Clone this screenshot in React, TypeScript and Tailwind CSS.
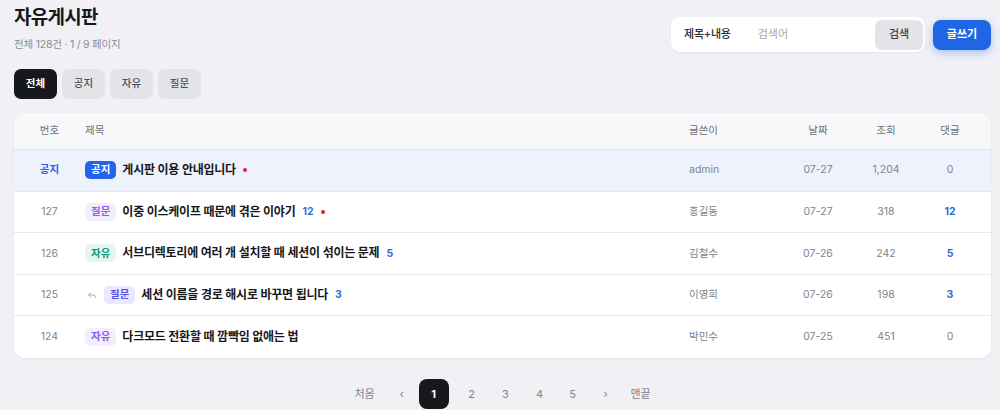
import React from "react";
import { Reply } from "lucide-react";

type Tag = "notice" | "qna" | "qna2" | "free" | "free2";

interface Post {
  no: string;
  tag: Tag;
  title: string;
  comments?: number;
  isNew?: boolean;
  reply?: boolean;
  author: string;
  date: string;
  views: string;
  commentCount: number;
}

const posts: Post[] = [
  { no: "공지", tag: "notice", title: "게시판 이용 안내입니다", isNew: true, author: "admin", date: "07-27", views: "1,204", commentCount: 0 },
  { no: "127", tag: "qna", title: "이중 이스케이프 때문에 겪은 이야기", comments: 12, isNew: true, author: "홍길동", date: "07-27", views: "318", commentCount: 12 },
  { no: "126", tag: "free", title: "서브디렉토리에 여러 개 설치할 때 세션이 섞이는 문제", comments: 5, author: "김철수", date: "07-26", views: "242", commentCount: 5 },
  { no: "125", tag: "qna2", title: "세션 이름을 경로 해시로 바꾸면 됩니다", comments: 3, reply: true, author: "이영희", date: "07-26", views: "198", commentCount: 3 },
  { no: "124", tag: "free2", title: "다크모드 전환할 때 깜빡임 없애는 법", author: "박민수", date: "07-25", views: "451", commentCount: 0 },
];

function Badge({ tag }: { tag: Tag }) {
  if (tag === "notice")
    return <span className="inline-flex h-[18px] items-center rounded-[5px] bg-[#2563eb] px-[6px] text-[10.5px] font-bold text-white">공지</span>;
  if (tag === "qna")
    return <span className="inline-flex h-[18px] items-center rounded-[5px] bg-[#f3edfc] px-[6px] text-[10.5px] font-semibold text-[#8b5cf6]">질문</span>;
  if (tag === "qna2")
    return <span className="inline-flex h-[18px] items-center rounded-[5px] bg-[#e9e8fd] px-[6px] text-[10.5px] font-semibold text-[#5b53e8]">질문</span>;
  if (tag === "free")
    return <span className="inline-flex h-[18px] items-center rounded-[5px] bg-[#e3f6ef] px-[6px] text-[10.5px] font-semibold text-[#0f9a7a]">자유</span>;
  return <span className="inline-flex h-[18px] items-center rounded-[5px] bg-[#f3edfc] px-[6px] text-[10.5px] font-semibold text-[#8b5cf6]">자유</span>;
}

const font = { fontFamily: "Inter, 'Noto Sans CJK KR', sans-serif" };

export default function App() {
  return (
    <div className="min-h-[410px] bg-[#f1f1f5] pl-[14px] pr-[9px] pt-[4px]" style={font}>
      {/* header */}
      <div className="flex items-start justify-between">
        <div>
          <h1 className="text-[19px] font-bold leading-[28px] tracking-[-0.04em] text-[#17181c]">자유게시판</h1>
          <p className="mt-[6px] text-[10.5px] leading-[14px] tracking-[-0.02em] text-[#8a8d96]">전체 128건 · 1 / 9 페이지</p>
          <div className="mt-[17px] flex gap-[5px]">
            <button className="h-[30px] w-[43px] rounded-[7px] bg-[#17181c] text-[10.5px] font-bold text-white">전체</button>
            <button className="h-[30px] w-[43px] rounded-[7px] bg-[#e3e4e8] text-[10.5px] font-medium text-[#4b4f59]">공지</button>
            <button className="h-[30px] w-[43px] rounded-[7px] bg-[#e3e4e8] text-[10.5px] font-medium text-[#4b4f59]">자유</button>
            <button className="h-[30px] w-[43px] rounded-[7px] bg-[#e3e4e8] text-[10.5px] font-medium text-[#4b4f59]">질문</button>
          </div>
        </div>
        <div className="mt-[13px] flex items-center gap-[8px]">
          <div className="flex h-[35px] w-[254px] items-center rounded-[9px] bg-white pl-[13px] pr-[2px] shadow-[0_1px_2px_rgba(0,0,0,0.05)]">
            <span className="text-[11px] font-medium tracking-[-0.02em] text-[#2a2c33]">제목+내용</span>
            <span className="ml-[27px] flex-1 text-[11px] text-[#a3a6ae]">검색어</span>
            <button className="h-[30px] w-[48px] rounded-[7px] bg-[#e3e4e8] text-[11px] font-medium text-[#3d4049]">검색</button>
          </div>
          <button className="h-[30px] w-[58px] rounded-[8px] bg-[#1f66e5] text-[11px] font-bold text-white shadow-[0_3px_8px_rgba(37,99,235,0.35)]">글쓰기</button>
        </div>
      </div>

      {/* table */}
      <div className="mt-[14px] overflow-hidden rounded-[12px] bg-white shadow-[0_1px_3px_rgba(0,0,0,0.06)]">
        <div className="grid h-[37px] grid-cols-[71px_1fr_94px_70px_66px_62px] items-center border-b border-[#e3e5ea] bg-[#f8f8fa] pr-[10px] text-[10.5px] text-[#6b6f78]">
          <div className="text-center">번호</div>
          <div>제목</div>
          <div>글쓴이</div>
          <div className="text-center">날짜</div>
          <div className="text-center">조회</div>
          <div className="text-center">댓글</div>
        </div>
        {posts.map((p, i) => (
          <div
            key={p.no}
            className={
              "grid h-[41.6px] grid-cols-[71px_1fr_94px_70px_66px_62px] items-center pr-[10px] text-[10.5px] " +
              (i < posts.length - 1 ? "border-b border-[#e8e9ed] " : "") +
              (p.tag === "notice" ? "bg-[#eef2fd]" : "bg-white")
            }
          >
            <div className={"text-center " + (p.tag === "notice" ? "font-semibold text-[#2563eb]" : "text-[#80848c]")}>{p.no}</div>
            <div className="flex items-center">
              {p.reply && <Reply size={10} strokeWidth={2} className="ml-[2px] mr-[7px] text-[#9ca0a8]" />}
              <Badge tag={p.tag} />
              <span className="ml-[6px] text-[12px] font-semibold tracking-[-0.02em] text-[#17181c]">{p.title}</span>
              {p.comments !== undefined && (
                <span className="ml-[7px] text-[10.5px] font-bold text-[#2f6bd8]">{p.comments}</span>
              )}
              {p.isNew && <span className="ml-[7px] h-[4px] w-[4px] rounded-full bg-[#dc2626]" />}
            </div>
            <div className="text-[#80848c]">{p.author}</div>
            <div className="text-center text-[#80848c]">{p.date}</div>
            <div className="text-center text-[#80848c]">{p.views}</div>
            <div className={"text-center " + (p.commentCount > 0 ? "font-bold text-[#2f6bd8]" : "text-[#80848c]")}>{p.commentCount}</div>
          </div>
        ))}
      </div>

      {/* pagination */}
      <div className="mt-[21px] flex items-center justify-center text-[11px] text-[#80848c]">
        <span className="w-[30px] text-center">처음</span>
        <span className="ml-[7px] w-[30px] text-center">‹</span>
        <span className="ml-[2px] flex h-[30px] w-[30px] items-center justify-center rounded-[8px] bg-[#17181c] font-bold text-white">1</span>
        <span className="ml-[8px] w-[30px] text-center">2</span>
        <span className="ml-[4px] w-[30px] text-center">3</span>
        <span className="ml-[4px] w-[30px] text-center">4</span>
        <span className="ml-[3px] w-[30px] text-center">5</span>
        <span className="ml-[3px] w-[30px] text-center">›</span>
        <span className="ml-[5px] w-[30px] text-center">맨끝</span>
      </div>
    </div>
  );
}
